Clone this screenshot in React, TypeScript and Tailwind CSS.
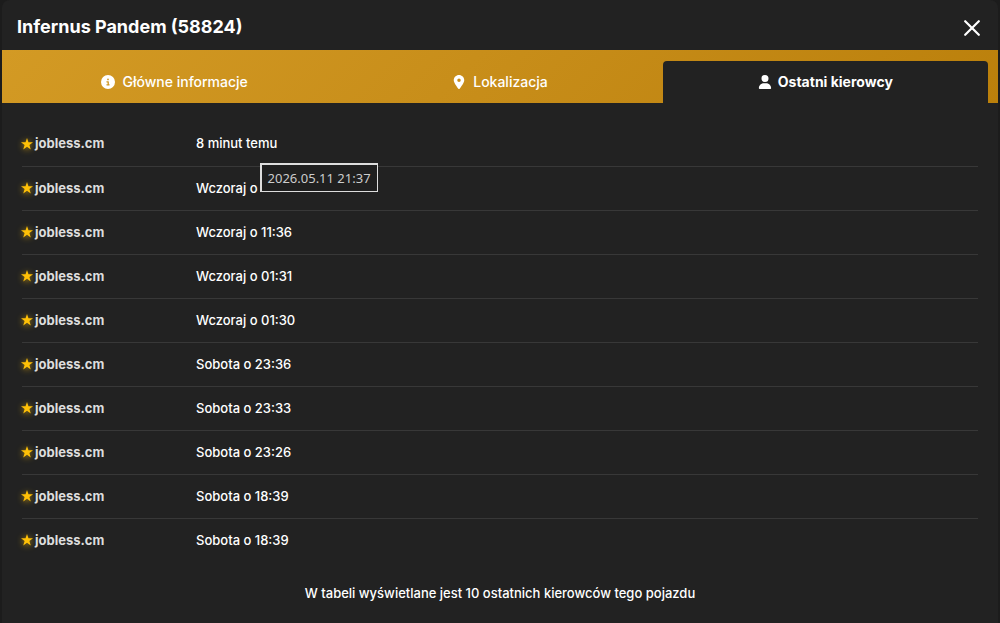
import { FaCircleInfo, FaLocationDot, FaUser } from "react-icons/fa6";

const drivers = [
  { name: "jobless.cm", time: "8 minut temu" },
  { name: "jobless.cm", time: "Wczoraj o", tooltip: "2026.05.11 21:37" },
  { name: "jobless.cm", time: "Wczoraj o 11:36" },
  { name: "jobless.cm", time: "Wczoraj o 01:31" },
  { name: "jobless.cm", time: "Wczoraj o 01:30" },
  { name: "jobless.cm", time: "Sobota o 23:36" },
  { name: "jobless.cm", time: "Sobota o 23:33" },
  { name: "jobless.cm", time: "Sobota o 23:26" },
  { name: "jobless.cm", time: "Sobota o 18:39" },
  { name: "jobless.cm", time: "Sobota o 18:39" },
];

const tabs = [
  { label: "Główne informacje", Icon: FaCircleInfo, active: false },
  { label: "Lokalizacja", Icon: FaLocationDot, active: false },
  { label: "Ostatni kierowcy", Icon: FaUser, active: true },
];

function Star() {
  return (
    <svg
      viewBox="0 0 24 24"
      aria-hidden="true"
      className="size-3 shrink-0 drop-shadow-[0_1px_3px_#ffc107aa]"
      fill="#ffc107"
    >
      <path d="M12 0 14.9 8.6H24L16.8 14 19.5 22.8 12 17.5 4.5 22.8 7.2 14 0 8.6H9.1Z" />
    </svg>
  );
}

export default function App() {
  return (
    <div className="min-h-screen bg-[#1c1c1c] px-[2px] font-['Inter',sans-serif] text-sm font-[450] text-white">
      <section
        role="dialog"
        aria-labelledby="vehicle-title"
        className="min-h-screen rounded-t-lg bg-[#222222]"
      >
        <header className="flex h-[50px] items-center justify-between pr-[18px] pl-[15px] pt-[3px]">
          <h1 id="vehicle-title" className="text-lg font-bold">
            Infernus Pandem (58824)
          </h1>
          <button type="button" aria-label="Zamknij" className="pt-[2px]">
            <svg viewBox="0 0 16 16" className="size-4" fill="none" stroke="currentColor" strokeWidth="2.2" strokeLinecap="round">
              <path d="M1.2 1.2 14.8 14.8M14.8 1.2 1.2 14.8" />
            </svg>
          </button>
        </header>

        <div
          role="tablist"
          className="grid grid-cols-3 bg-linear-135 from-[#d39a24] to-[#bb800b] px-[10px] pt-[11px]"
        >
          {tabs.map(({ label, Icon, active }) => (
            <button
              key={label}
              type="button"
              role="tab"
              aria-selected={active}
              className={
                active
                  ? "flex h-[42px] items-center justify-center gap-[6px] rounded-t bg-[#222222] font-bold"
                  : "flex h-[42px] items-center justify-center gap-[7px]"
              }
            >
              <Icon className="size-[14px]" aria-hidden="true" />
              {label}
            </button>
          ))}
        </div>

        <main className="px-5 pt-[19px]">
          <table className="w-full table-fixed border-collapse text-[13px]">
            <colgroup>
              <col className="w-[174px]" />
              <col />
            </colgroup>
            <tbody>
              {drivers.map((driver, index) => (
                <tr key={index} className="h-[44px] border-b border-[#383838] last:border-b-0">
                  <td className="p-0 font-bold text-[#dddddd]">
                    <span className="-ml-px flex items-center gap-[2px]">
                      <Star />
                      {driver.name}
                    </span>
                  </td>
                  <td className="p-0">
                    <span className="relative">
                      {driver.time}
                      {driver.tooltip && (
                        <span
                          role="tooltip"
                          className="absolute bottom-1 left-full ml-[2px] border border-t-2 border-l-2 border-[#dddddd] bg-[#1f1f1f] px-[6px] py-1 font-['Noto_Sans',sans-serif] text-[13px] leading-[18px] font-normal whitespace-nowrap text-[#cccccc]"
                        >
                          {driver.tooltip}
                        </span>
                      )}
                    </span>
                  </td>
                </tr>
              ))}
            </tbody>
          </table>
          <p className="py-[22px] text-center text-[13px]">
            W tabeli wyświetlane jest 10 ostatnich kierowców tego pojazdu
          </p>
        </main>
      </section>
    </div>
  );
}
